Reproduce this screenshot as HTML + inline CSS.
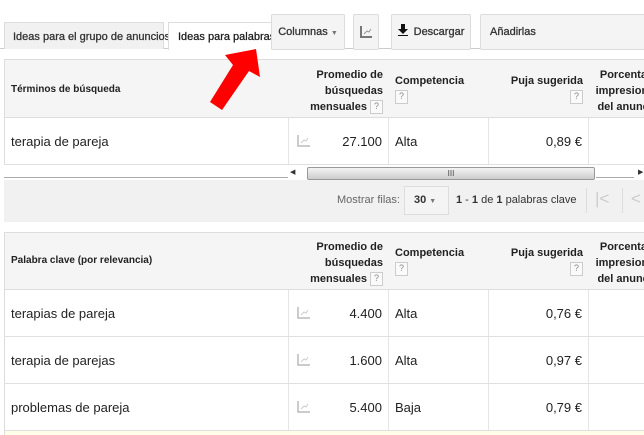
<!DOCTYPE html><html><head><style>
body{margin:0;width:644px;height:435px;overflow:hidden;background:#fff;font-family:"Liberation Sans",Arial,sans-serif;position:relative}
div{position:absolute;box-sizing:border-box;white-space:nowrap}
.h{font-size:11px;font-weight:bold;color:#222;line-height:16px}
.h2{font-size:10px;font-weight:bold;color:#222;line-height:16px}
.q{display:inline-block;width:11px;height:12px;border:1px solid #ccc;font-size:9px;color:#888;text-align:center;line-height:10px;font-weight:normal;vertical-align:middle;background:#fafafa}
.btn{top:14px;height:36px;border:1px solid #dcdcdc;border-radius:2px;background:#f4f4f4;font-size:11px;color:#333;line-height:34px;text-align:center;-webkit-text-stroke:0.3px #333}
.c{font-size:13px;color:#222}
.vl{width:1px;background:#e5e5e5}
.hl{height:1px;background:#e0e0e0;left:4px;right:0}
.tab{font-size:11px;color:#333;-webkit-text-stroke:0.3px #333}
</style></head><body>
<div style="left:0;right:0;top:48px;height:1px;background:#ccc"></div>
<div class="tab" style="left:4px;top:22px;width:160px;height:27px;background:#f1f1f1;border:1px solid #ddd;border-bottom:none;line-height:28px;padding-left:8px">Ideas para el grupo de anuncios</div>
<div class="tab" style="left:168px;top:22px;width:130px;height:28px;background:#fff;border:1px solid #ddd;border-bottom:none;color:#111;line-height:28px;padding-left:9px;overflow:hidden">Ideas para palabras clave</div>
<div class="btn" style="left:271px;width:74px">Columnas <span style="font-size:7px;color:#777;-webkit-text-stroke:0">▼</span></div>
<div class="btn" style="left:353px;width:26px;-webkit-text-stroke:0"><svg width="14" height="14" viewBox="0 0 14 14" style="margin-top:10px"><path d="M2 1V12H13" stroke="#777" stroke-width="2" fill="none"/><path d="M5 9L8 6L10 7L12 4" stroke="#999" stroke-width="1" fill="none"/></svg></div>
<div class="btn" style="left:391px;width:80px"><svg width="10" height="12" viewBox="0 0 10 12" style="vertical-align:-1px;margin-right:6px"><path d="M3 0H7V5H10L5 10L0 5H3Z" fill="#111"/><rect x="0" y="11" width="10" height="1.5" fill="#111"/></svg>Descargar</div>
<div class="btn" style="left:480px;width:180px;text-align:left;padding-left:9px">Añadirlas</div>

<div style="left:4px;right:0;top:59px;height:59px;background:#f5f5f5;border:1px solid #ddd;border-right:none"></div>
<div class="h2" style="left:11px;top:82px">Términos de búsqueda</div>
<div class="h" style="left:283px;top:67px;width:100px;text-align:right">Promedio de<br>búsquedas<br>mensuales <span class="q">?</span></div>
<div class="h" style="left:395px;top:73px">Competencia<br><span class="q">?</span></div>
<div class="h" style="left:483px;top:73px;width:100px;text-align:right">Puja sugerida<br><span class="q">?</span></div>
<div class="h" style="left:592px;top:67px;width:72px;text-align:center">Porcentaje<br>impresiones<br>del anuncio</div>
<div style="left:4px;width:1px;top:118px;height:47px;background:#ddd"></div>
<div class="vl" style="left:288px;top:118px;height:47px"></div>
<div class="vl" style="left:388px;top:118px;height:47px"></div>
<div class="vl" style="left:488px;top:118px;height:47px"></div>
<div class="vl" style="left:588px;top:118px;height:47px"></div>
<div class="c" style="left:11px;top:134px">terapia de pareja</div>
<div class="c" style="left:320px;top:134px;width:62px;text-align:right">27.100</div>
<div class="c" style="left:395px;top:134px">Alta</div>
<div class="c" style="left:500px;top:134px;width:82px;text-align:right">0,89 €</div>
<svg style="position:absolute;left:297px;top:135px" width="13" height="12"><path d="M1 0V11H13" stroke="#bbb" stroke-width="1.5" fill="none"/><path d="M4 8L7 5L9 6L11 3" stroke="#ccc" fill="none"/></svg>
<div class="hl" style="top:164px"></div>
<div style="left:4px;width:284px;top:177px;height:1px;background:#aaa"></div>
<div style="left:290px;top:168px;width:10px;height:10px;font-size:7px;color:#333">◀</div>
<div style="left:307px;top:167px;width:288px;height:13px;border:1px solid #999;border-radius:2px;background:linear-gradient(#f4f4f4,#ccc);font-size:8px;text-align:center;line-height:11px;color:#444">III</div>
<div style="left:596px;top:177px;width:38px;height:1px;background:#aaa"></div>
<div style="left:638px;top:168px;font-size:7px;color:#333">▶</div>
<div style="left:4px;right:0;top:180px;height:42px;background:#f1f1f1"></div>
<div style="left:337px;top:194px;font-size:11px;color:#666">Mostrar filas:</div>
<div style="left:404px;top:186px;width:45px;height:29px;border:1px solid #ddd;background:#f4f4f4;font-size:11px;font-weight:bold;color:#333;line-height:27px;padding-left:9px">30 <span style="font-size:7px;color:#777">▼</span></div>
<div style="left:456px;top:194px;font-size:11px;color:#333"><b>1</b> - <b>1</b> de <b>1</b> palabras clave</div>
<div style="left:586px;top:188px;width:1px;height:25px;background:#ddd"></div>
<div style="left:595px;top:189px;font-size:17px;color:#ccc">|&lt;</div>
<div style="left:622px;top:188px;width:1px;height:25px;background:#ddd"></div>
<div style="left:631px;top:189px;font-size:17px;color:#ccc">&lt;</div>

<div style="left:4px;right:0;top:232px;height:58px;background:#f5f5f5;border:1px solid #ddd;border-right:none"></div>
<div class="h2" style="left:11px;top:253px">Palabra clave (por relevancia)</div>
<div class="h" style="left:283px;top:239px;width:100px;text-align:right">Promedio de<br>búsquedas<br>mensuales <span class="q">?</span></div>
<div class="h" style="left:395px;top:245px">Competencia<br><span class="q">?</span></div>
<div class="h" style="left:483px;top:245px;width:100px;text-align:right">Puja sugerida<br><span class="q">?</span></div>
<div class="h" style="left:592px;top:239px;width:72px;text-align:center">Porcentaje<br>impresiones<br>del anuncio</div>
<div style="left:4px;width:1px;top:290px;height:145px;background:#ddd"></div>
<div class="vl" style="left:288px;top:290px;height:145px"></div>
<div class="vl" style="left:388px;top:290px;height:145px"></div>
<div class="vl" style="left:488px;top:290px;height:145px"></div>
<div class="vl" style="left:588px;top:290px;height:145px"></div>
<div style="left:5px;right:0;top:431px;height:4px;background:#fdfde8"></div>
<div class="hl" style="top:336px"></div><div class="hl" style="top:383px"></div><div class="hl" style="top:430px"></div>

<div class="c" style="left:11px;top:306px">terapias de pareja</div>
<div class="c" style="left:320px;top:306px;width:62px;text-align:right">4.400</div>
<div class="c" style="left:395px;top:306px">Alta</div>
<div class="c" style="left:500px;top:306px;width:82px;text-align:right">0,76 €</div>
<svg style="position:absolute;left:297px;top:307px" width="13" height="12"><path d="M1 0V11H13" stroke="#bbb" stroke-width="1.5" fill="none"/><path d="M4 8L7 5L9 6L11 3" stroke="#ccc" fill="none"/></svg>

<div class="c" style="left:11px;top:353px">terapia de parejas</div>
<div class="c" style="left:320px;top:353px;width:62px;text-align:right">1.600</div>
<div class="c" style="left:395px;top:353px">Alta</div>
<div class="c" style="left:500px;top:353px;width:82px;text-align:right">0,97 €</div>
<svg style="position:absolute;left:297px;top:354px" width="13" height="12"><path d="M1 0V11H13" stroke="#bbb" stroke-width="1.5" fill="none"/><path d="M4 8L7 5L9 6L11 3" stroke="#ccc" fill="none"/></svg>

<div class="c" style="left:11px;top:400px">problemas de pareja</div>
<div class="c" style="left:320px;top:400px;width:62px;text-align:right">5.400</div>
<div class="c" style="left:395px;top:400px">Baja</div>
<div class="c" style="left:500px;top:400px;width:82px;text-align:right">0,79 €</div>
<svg style="position:absolute;left:297px;top:401px" width="13" height="12"><path d="M1 0V11H13" stroke="#bbb" stroke-width="1.5" fill="none"/><path d="M4 8L7 5L9 6L11 3" stroke="#ccc" fill="none"/></svg>

<svg style="position:absolute;left:0;top:0" width="644" height="435"><polygon points="225,55 256,49 260,77 249,71 222,110 210,102 233,65" fill="#f00"/></svg>
</body></html>
